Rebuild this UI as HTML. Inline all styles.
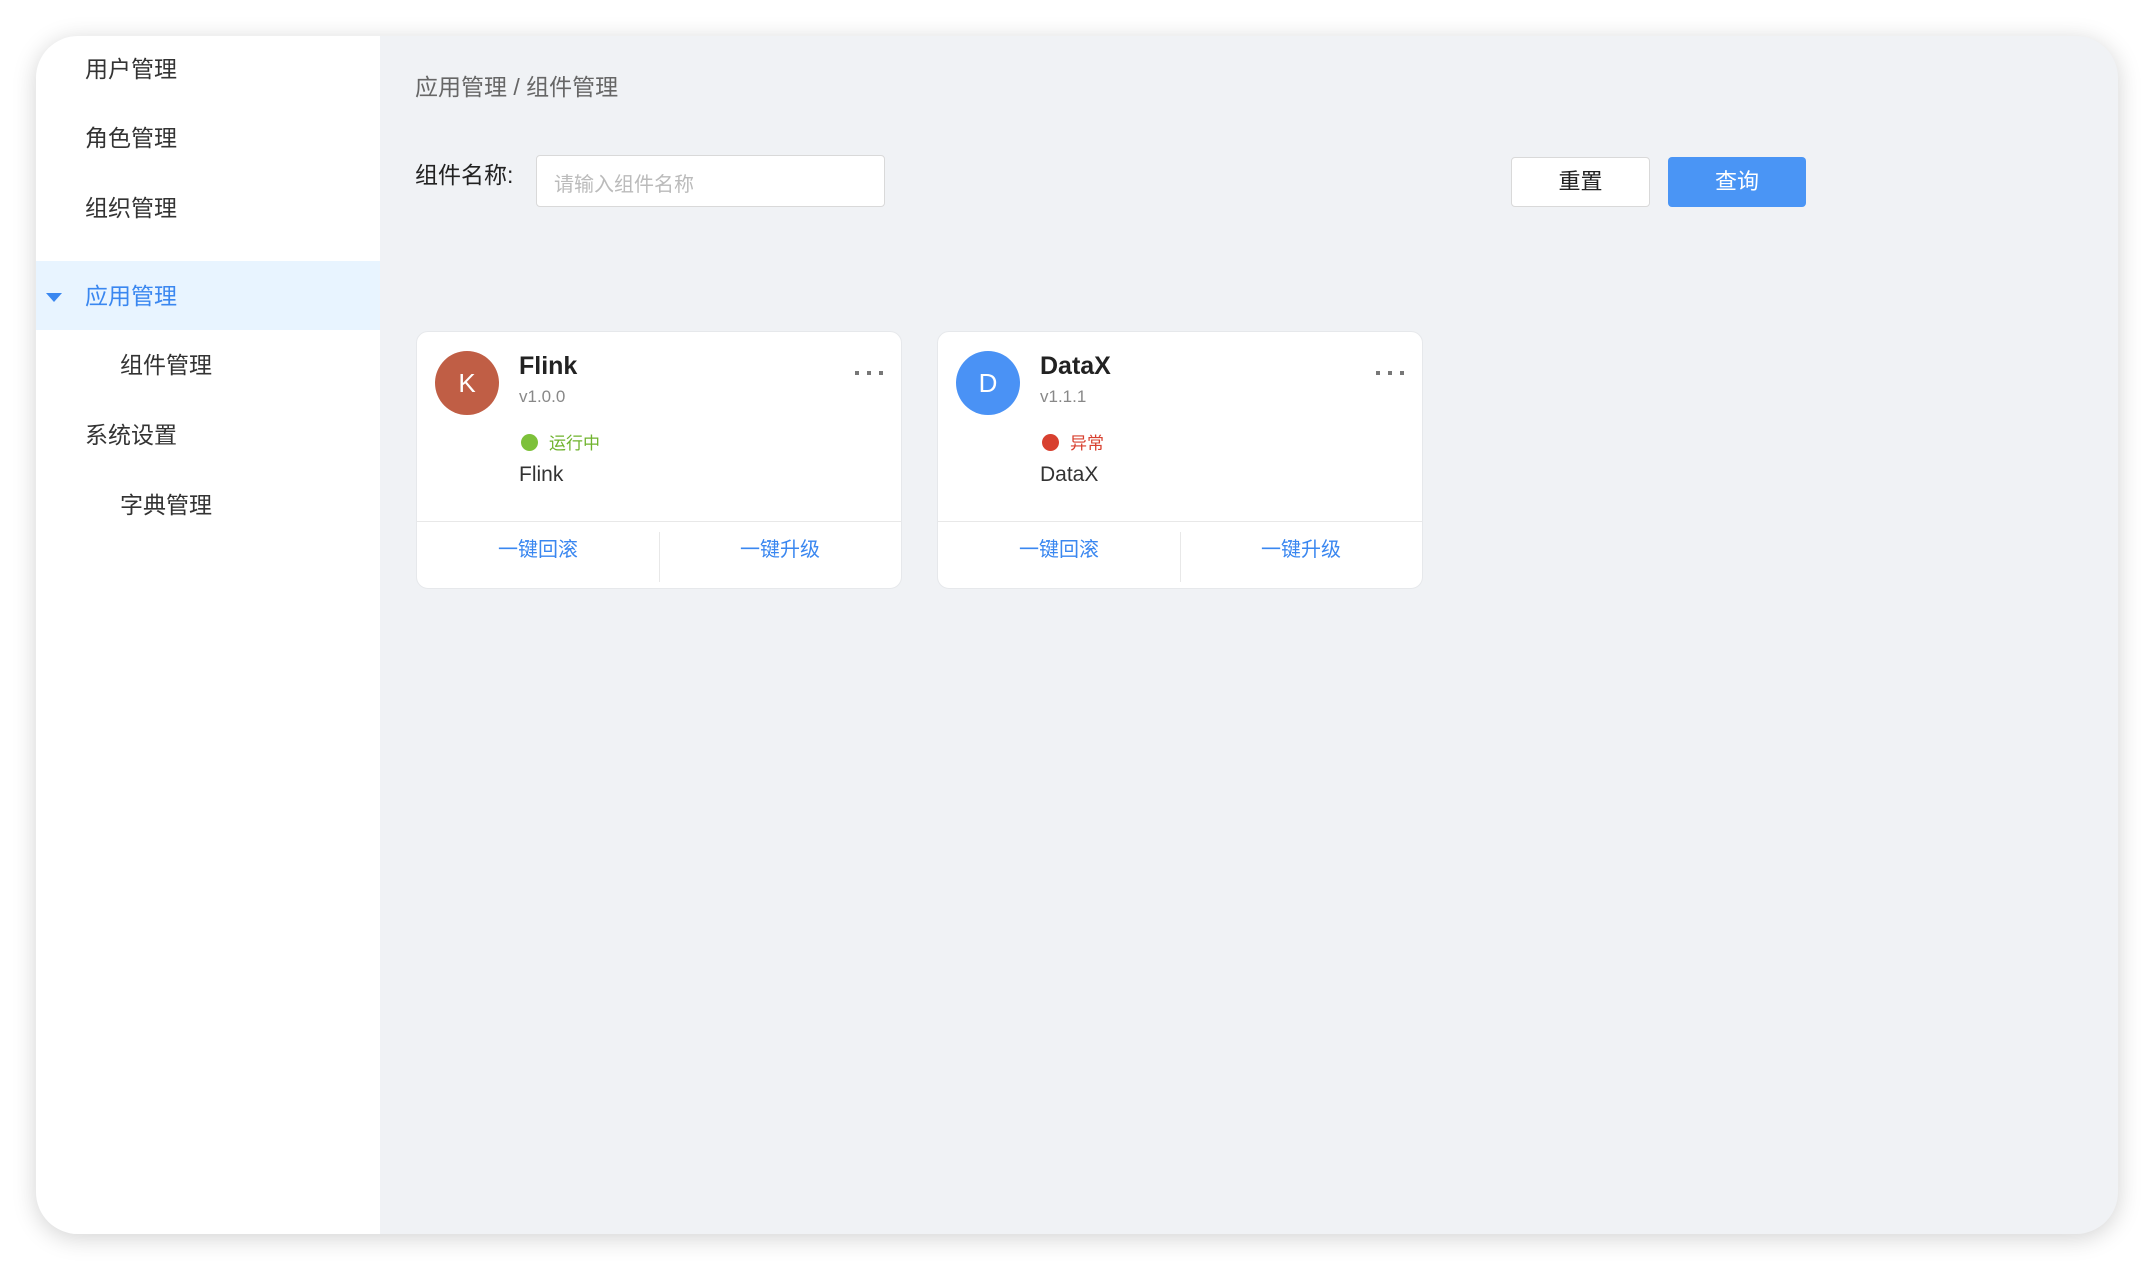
<!DOCTYPE html>
<html><head><meta charset="utf-8"><style>
*{margin:0;padding:0;box-sizing:border-box}
body{width:2154px;height:1270px;background:#fff;font-family:"Liberation Sans","Noto Sans CJK SC",sans-serif;position:relative;overflow:hidden}
.frame{position:absolute;left:36px;top:36px;width:2082px;height:1198px;border-radius:42px;background:#f0f2f5;box-shadow:0 4px 24px rgba(0,0,0,.18);overflow:hidden}
.side{position:absolute;left:0;top:0;width:344px;height:100%;background:#fff}
.mi{position:absolute;left:49px;font-size:23px;color:#333;line-height:30px}
.sub{left:84px}
.act{position:absolute;left:0;top:225px;width:344px;height:69px;background:#e8f4ff}
.abs{position:absolute}
.card{position:absolute;top:295px;width:486px;height:258px;background:#fff;border-radius:12px;border:1px solid #e6e8eb}
.av{position:absolute;left:18px;top:19px;width:64px;height:64px;border-radius:50%;color:#fff;font-size:26px;text-align:center;line-height:64px}
.t{position:absolute;left:102px;top:20px;font-size:25px;font-weight:bold;color:#222}
.v{position:absolute;left:102px;top:55px;font-size:17px;color:#888}
.dot{position:absolute;left:104px;top:102px;width:17px;height:17px;border-radius:50%}
.st{position:absolute;left:132px;top:97px;font-size:17px}
.nm{position:absolute;left:102px;top:131px;font-size:21px;color:#333}
.hr{position:absolute;left:0;right:0;top:189px;border-top:1px solid #e8e8e8}
.vr{position:absolute;left:242px;top:200px;height:50px;border-left:1px solid #e8e8e8}
.b{position:absolute;top:201px;width:242px;text-align:center;font-size:20px;color:#3a87f0}
.dots{position:absolute;right:18px;top:39px;width:28px;height:4px}
.dots i{position:absolute;top:0;width:4px;height:4px;background:#777}
</style></head><body>
<div class="frame">
<div class="side">
<div class="act"></div>
<div class="mi" style="top:18px">用户管理</div>
<div class="mi" style="top:87px">角色管理</div>
<div class="mi" style="top:157px">组织管理</div>
<svg class="abs" style="left:10px;top:257px" width="16" height="10"><path d="M0 0H16L8 9Z" fill="#3a87f0"/></svg>
<div class="mi" style="top:245px;color:#3a87f0">应用管理</div>
<div class="mi sub" style="top:314px">组件管理</div>
<div class="mi" style="top:384px">系统设置</div>
<div class="mi sub" style="top:454px">字典管理</div>
</div>
<div class="abs" style="left:379px;top:32px;font-size:23px;color:#666">应用管理 / 组件管理</div>
<div class="abs" style="left:379px;top:120px;font-size:23px;color:#222">组件名称:</div>
<div class="abs" style="left:500px;top:119px;width:349px;height:52px;background:#fff;border:1px solid #d9d9d9;border-radius:4px;font-size:20px;color:#bbb;padding:12px 0 0 17px">请输入组件名称</div>
<div class="abs" style="left:1475px;top:121px;width:139px;height:50px;background:#fff;border:1px solid #d9d9d9;border-radius:4px;font-size:22px;color:#222;text-align:center;line-height:48px">重置</div>
<div class="abs" style="left:1632px;top:121px;width:138px;height:50px;background:#4a95f5;border-radius:4px;font-size:22px;color:#fff;text-align:center;line-height:50px">查询</div>
<div class="card" style="left:380px">
<div class="av" style="background:#c05e45">K</div>
<div class="t">Flink</div><div class="v">v1.0.0</div><div class="dots"><i style="left:0"></i><i style="left:12px"></i><i style="left:24px"></i></div>
<div class="dot" style="background:#7dc13a"></div><div class="st" style="color:#6fb32d">运行中</div>
<div class="nm">Flink</div>
<div class="hr"></div><div class="vr"></div>
<div class="b" style="left:0">一键回滚</div><div class="b" style="left:242px">一键升级</div>
</div>
<div class="card" style="left:901px">
<div class="av" style="background:#4a92f5">D</div>
<div class="t">DataX</div><div class="v">v1.1.1</div><div class="dots"><i style="left:0"></i><i style="left:12px"></i><i style="left:24px"></i></div>
<div class="dot" style="background:#d8402f"></div><div class="st" style="color:#d8402f">异常</div>
<div class="nm">DataX</div>
<div class="hr"></div><div class="vr"></div>
<div class="b" style="left:0">一键回滚</div><div class="b" style="left:242px">一键升级</div>
</div>
</div>
</body></html>
